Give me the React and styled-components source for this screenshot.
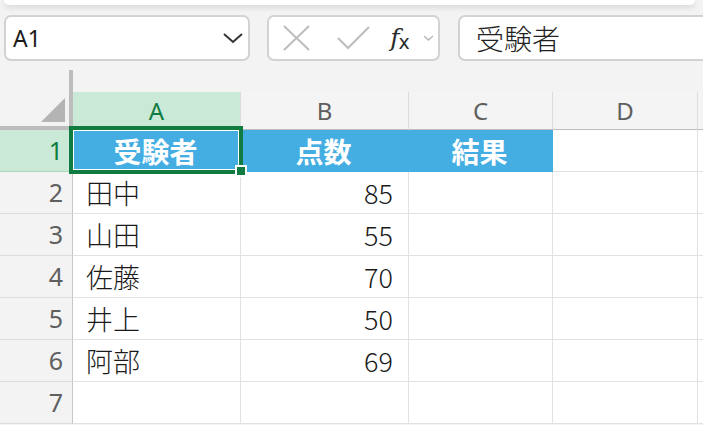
import React from 'react';
import styled, { createGlobalStyle } from 'styled-components';

const GlobalStyle = createGlobalStyle`
  html, body {
    margin: 0;
    padding: 0;
    background: #f3f3f3;
    overflow: hidden;
  }
  body {
    font-family: "Noto Sans", "Noto Sans CJK JP", sans-serif;
  }
  * { box-sizing: border-box; }
`;

const cjk = `"Noto Sans CJK JP", "Noto Sans", sans-serif`;

const Ribbon = styled.div`
  height: 5px;
  margin: 0 8px 0 4px;
  background: #fff;
  border-radius: 0 0 8px 8px;
  box-shadow: 0 2px 6px rgba(0, 0, 0, 0.14);
`;

const FormulaBar = styled.div`
  display: flex;
  gap: 17px;
  height: 56px;
  padding: 10px 0 0 4px;
`;

const Box = styled.div`
  display: flex;
  align-items: center;
  height: 46px;
  background: #fff;
  border: 2px solid #d2d2d2;
  border-radius: 7px;
`;

const NameBox = styled(Box)`
  width: 246px;
  justify-content: space-between;
  padding: 0 4px 0 7px;
  font-size: 23px;
  color: #1b1b1b;
`;

const ButtonBox = styled(Box)`
  width: 173px;
  padding: 0;
`;

const IconButton = styled.span`
  display: flex;
  align-items: center;
  justify-content: center;
  flex: none;
  width: ${p => p.$w}px;
  margin-left: ${p => p.$ml}px;
  height: 100%;
`;

const Fx = styled.span`
  font-family: "DejaVu Serif", serif;
  font-style: italic;
  font-size: 25px;
  color: #2b2b2b;
  line-height: 1;
  sub {
    font-family: "DejaVu Sans", sans-serif;
    font-style: normal;
    font-size: 19px;
    vertical-align: -3px;
    margin-left: -1px;
  }
`;

const FormulaInput = styled(Box)`
  flex: 1;
  margin-left: 1px;
  margin-right: -20px;
  padding-left: 16px;
  font-family: ${cjk};
  font-size: 28px;
  font-weight: 300;
  color: #222;
`;

const Sheet = styled.div`
  position: relative;
  margin-top: 9px;
  display: grid;
  grid-template-columns: 73px 168px 168px 144px 145px 1fr;
  grid-template-rows: 60px;
  grid-auto-rows: 42px;
`;

const Corner = styled.div`
  display: flex;
  align-items: flex-end;
  justify-content: flex-end;
  padding: 0 4px 4px 0;
  border-right: 4px solid #bdbdbd;
  border-bottom: 4px solid #bdbdbd;
  &::after {
    content: "";
    width: 24px;
    height: 24px;
    background: #b4b4b4;
    clip-path: polygon(100% 0, 100% 100%, 0 100%);
  }
`;

const ColHead = styled.div`
  margin-top: 22px;
  display: flex;
  align-items: center;
  justify-content: center;
  padding-top: 1px;
  background: ${p => (p.$active ? '#cae9d6' : '#f4f4f4')};
  color: ${p => (p.$active ? '#107c41' : '#5f5f5f')};
  border-right: 1px solid #dcdcdc;
  border-bottom: 1px solid #bdbdbd;
  font-size: 24px;
  line-height: 1;
`;

const RowHead = styled.div`
  display: flex;
  align-items: center;
  justify-content: flex-end;
  padding-right: 9px;
  background: ${p => (p.$active ? '#cae9d6' : '#f3f3f3')};
  color: ${p => (p.$active ? '#107c41' : '#5f5f5f')};
  border-right: 1px solid #c6c6c6;
  border-bottom: 1px solid ${p => (p.$active ? '#a8d9ba' : '#dcdcdc')};
  font-size: 25px;
  line-height: 1;
`;

const Cell = styled.div`
  display: flex;
  align-items: center;
  justify-content: ${p => (p.$head ? 'center' : p.$num ? 'flex-end' : 'flex-start')};
  padding: 0 15px 0 13px;
  background: ${p => (p.$head ? '#44aee2' : '#fff')};
  color: ${p => (p.$head ? '#fff' : '#1a1a1a')};
  font-weight: ${p => (p.$head ? 700 : 300)};
  border-right: 1px solid ${p => (p.$head ? '#44aee2' : '#e1e1e1')};
  border-bottom: 1px solid ${p => (p.$head ? '#44aee2' : '#e1e1e1')};
  font-family: ${cjk};
  font-size: ${p => (p.$head ? 28 : 27)}px;
  line-height: 1;
  white-space: nowrap;
  overflow: hidden;
`;

const Selection = styled.div`
  position: absolute;
  left: 69px;
  top: 56px;
  width: 174px;
  height: 48px;
  border: 4px solid #107c41;
  box-shadow: inset 0 0 0 1px #fff;
  pointer-events: none;
`;

const FillHandle = styled.div`
  position: absolute;
  right: -8px;
  bottom: -7px;
  width: 12px;
  height: 12px;
  background: #107c41;
  border: 2px solid #fff;
`;

const columns = ['A', 'B', 'C', 'D', ''];

const rows = [
  ['受験者', '点数', '結果'],
  ['田中', 85],
  ['山田', 55],
  ['佐藤', 70],
  ['井上', 50],
  ['阿部', 69],
  [],
];

const Chevron = () => (
  <svg width="22" height="12" viewBox="0 0 22 12">
    <polyline points="2,2 11,10 20,2" fill="none" stroke="#333" strokeWidth="2" />
  </svg>
);

export default function App() {
  return (
    <>
      <GlobalStyle />
      <Ribbon />
      <FormulaBar>
        <NameBox>
          <span>A1</span>
          <Chevron />
        </NameBox>
        <ButtonBox>
          <IconButton $w={27} $ml={14}>
            <svg width="27" height="26" viewBox="0 0 27 26">
              <path d="M1 1 L26 25 M26 1 L1 25" stroke="#bdbdbd" strokeWidth="2" fill="none" />
            </svg>
          </IconButton>
          <IconButton $w={33} $ml={27}>
            <svg width="33" height="24" viewBox="0 0 33 24">
              <polyline points="1,12 11,22 32,1" stroke="#bdbdbd" strokeWidth="2" fill="none" />
            </svg>
          </IconButton>
          <IconButton $w={24} $ml={18}>
            <Fx>
              f<sub>x</sub>
            </Fx>
          </IconButton>
          <IconButton $w={12} $ml={10}>
            <svg width="11" height="6" viewBox="0 0 11 6">
              <polyline points="1,1 5.5,5 10,1" stroke="#b8b8b8" strokeWidth="1.4" fill="none" />
            </svg>
          </IconButton>
        </ButtonBox>
        <FormulaInput>受験者</FormulaInput>
      </FormulaBar>
      <Sheet>
        <Corner />
        {columns.map((c, i) => (
          <ColHead key={i} $active={c === 'A'}>
            {c}
          </ColHead>
        ))}
        {rows.map((row, r) => (
          <React.Fragment key={r}>
            <RowHead $active={r === 0}>{r + 1}</RowHead>
            {columns.map((_, c) => {
              const v = row[c];
              const head = r === 0 && c < 3;
              return (
                <Cell key={c} $head={head} $num={typeof v === 'number'}>
                  {v}
                </Cell>
              );
            })}
          </React.Fragment>
        ))}
        <Selection>
          <FillHandle />
        </Selection>
      </Sheet>
    </>
  );
}
